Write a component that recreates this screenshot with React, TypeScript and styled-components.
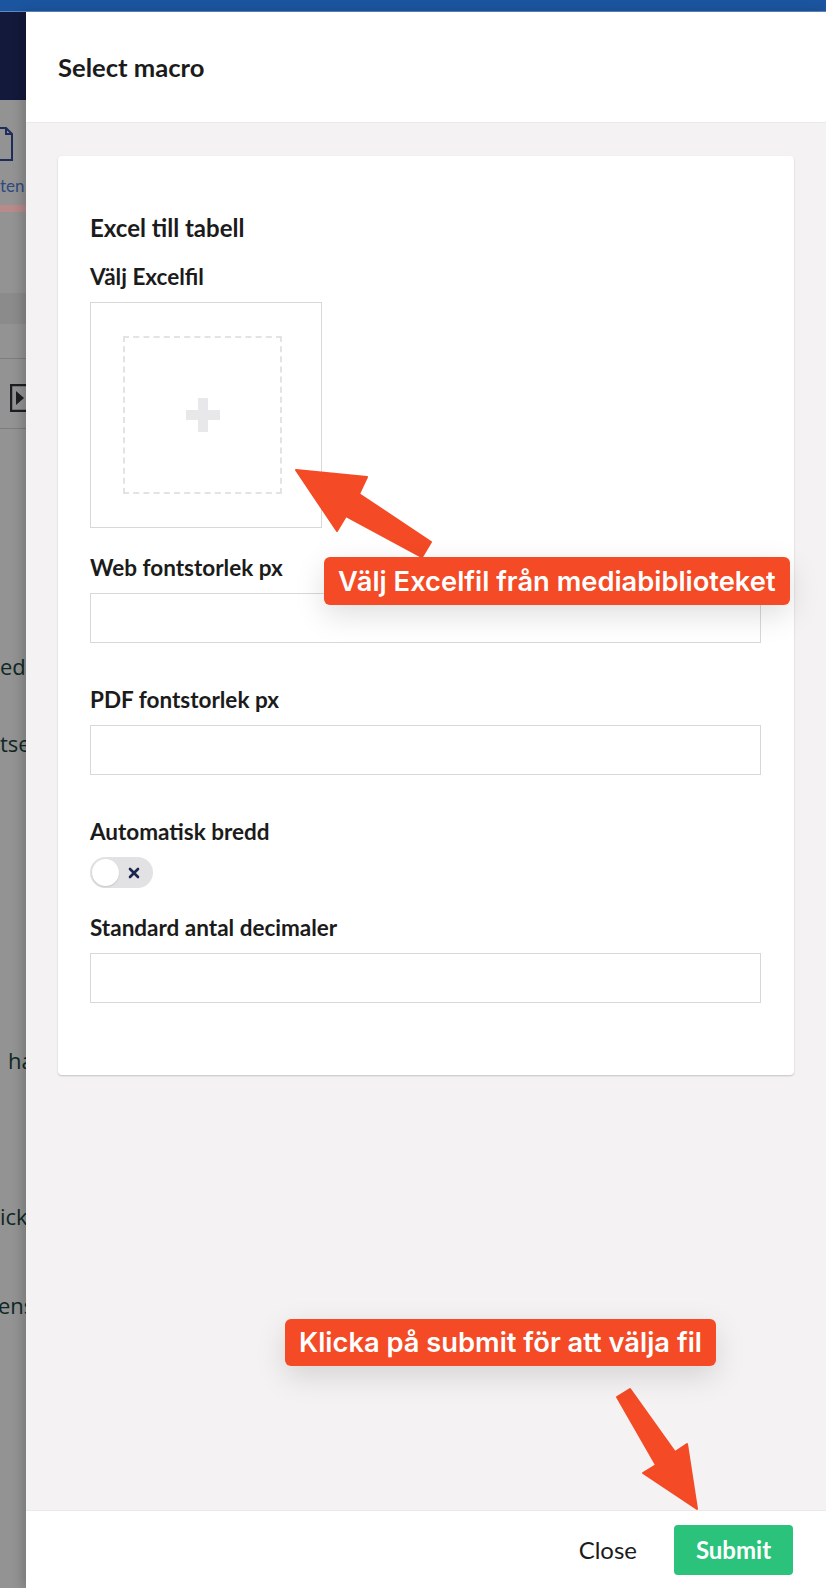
import React from 'react';
import styled, { createGlobalStyle } from 'styled-components';

const GlobalStyle = createGlobalStyle`
  html, body {
    margin: 0;
    padding: 0;
  }
  body {
    font-family: Lato, "Open Sans", sans-serif;
    background: #ffffff;
    color: #1b1b1b;
  }
  * {
    box-sizing: border-box;
  }
`;

const Page = styled.div`
  position: relative;
  width: 826px;
  height: 1588px;
  display: flex;
  flex-direction: column;
  overflow: hidden;
`;

const TopBar = styled.div`
  height: 12px;
  flex-shrink: 0;
  background: #1b55a0;
  border-bottom: 1px solid #6489bd;
`;

const Main = styled.div`
  flex: 1;
  display: flex;
  min-height: 0;
`;

/* the dimmed page behind the dialog */
const Backdrop = styled.div`
  width: 26px;
  flex-shrink: 0;
  background: #939393;
  display: flex;
  flex-direction: column;
  overflow: hidden;
`;

const NavBlock = styled.div`
  height: 88px;
  flex-shrink: 0;
  background: #12193a;
`;

const BackdropIcon = styled.svg<{ $mt: number; $ml: number }>`
  display: block;
  flex-shrink: 0;
  margin-top: ${(p) => p.$mt}px;
  margin-left: ${(p) => p.$ml}px;
`;

const TabText = styled.div`
  margin-top: 15px;
  height: 20px;
  line-height: 20px;
  font-family: Lato, sans-serif;
  font-size: 17px;
  color: #2f4a7e;
  white-space: nowrap;
`;

const TabUnderline = styled.div`
  margin-top: 9px;
  height: 7px;
  flex-shrink: 0;
  background: #b88a8a;
`;

const Band = styled.div`
  margin-top: 81px;
  height: 31px;
  flex-shrink: 0;
  background: #8b8b8b;
`;

const Rule = styled.div<{ $mt: number }>`
  margin-top: ${(p) => p.$mt}px;
  height: 1px;
  flex-shrink: 0;
  background: #7d7d7d;
`;

const BackdropWord = styled.div<{ $mt: number; $ml?: number }>`
  margin-top: ${(p) => p.$mt}px;
  margin-left: ${(p) => p.$ml ?? 0}px;
  height: 30px;
  line-height: 30px;
  flex-shrink: 0;
  font-family: "Open Sans", sans-serif;
  font-size: 22px;
  color: #0f2824;
  white-space: nowrap;
`;

const Dialog = styled.div`
  flex: 1;
  display: flex;
  flex-direction: column;
  background: #f4f2f3;
  box-shadow: -4px 0 10px rgba(0, 0, 0, 0.18);
  z-index: 1;
`;

const Header = styled.header`
  height: 111px;
  flex-shrink: 0;
  display: flex;
  align-items: center;
  padding: 0 32px;
  background: #ffffff;
  border-bottom: 1px solid #e9e9eb;
`;

const Title = styled.h1`
  margin: 0;
  font-size: 25.6px;
  font-weight: 700;
  color: #1b1b1b;
`;

const Body = styled.div`
  flex: 1;
  padding: 33px 32px 0 32px;
`;

const Card = styled.div`
  background: #ffffff;
  border-radius: 4px;
  box-shadow: 0 1px 2px rgba(0, 0, 0, 0.2);
  padding: 57px 33px 28px 32px;
`;

const CardHeading = styled.h2`
  margin: 0 0 21px 0;
  font-size: 24px;
  line-height: 29px;
  font-weight: 700;
  color: #1b1b1b;
`;

const Property = styled.div<{ $gap: number }>`
  margin-bottom: ${(p) => p.$gap}px;
`;

const Label = styled.label`
  display: block;
  margin-bottom: 12px;
  font-size: 22.5px;
  line-height: 27px;
  font-weight: 700;
  color: #1b1b1b;
`;

const TextInput = styled.input`
  display: block;
  width: 100%;
  height: 50px;
  margin: 0;
  padding: 0 12px;
  border: 1px solid #d8d7d9;
  border-radius: 0;
  background: #ffffff;
  font-family: Lato, sans-serif;
  font-size: 18px;
  outline: none;
`;

const UploadBox = styled.div`
  width: 232px;
  height: 226px;
  padding-left: 32px;
  border: 1px solid #d8d7d9;
  display: flex;
  align-items: center;
`;

const UploadTarget = styled.div`
  width: 159px;
  height: 158px;
  border: 2px dashed #e3e2e4;
  display: flex;
  align-items: center;
  justify-content: center;
`;

const Toggle = styled.div`
  width: 63px;
  height: 31px;
  border-radius: 16px;
  background: #e2e1e4;
  display: flex;
  align-items: center;
  gap: 9px;
  padding: 0 2px;
`;

const Knob = styled.span`
  width: 27px;
  height: 27px;
  border-radius: 50%;
  background: #ffffff;
  box-shadow: 0 1px 2px rgba(0, 0, 0, 0.12);
`;

const Footer = styled.footer`
  height: 78px;
  flex-shrink: 0;
  display: flex;
  align-items: center;
  justify-content: flex-end;
  padding-right: 33px;
  background: #ffffff;
  border-top: 1px solid #e9e9eb;
`;

const CloseButton = styled.button`
  height: 50px;
  margin-right: 21px;
  padding: 0 16px;
  border: none;
  background: transparent;
  font-family: Lato, sans-serif;
  font-size: 24px;
  color: #1b1b1b;
  cursor: pointer;
`;

const SubmitButton = styled.button`
  width: 119px;
  height: 50px;
  padding: 0;
  border: none;
  border-radius: 4px;
  background: #2bc37c;
  color: #ffffff;
  font-family: Lato, sans-serif;
  font-size: 24px;
  font-weight: 700;
  cursor: pointer;
`;

/* tutorial annotations lying over the screenshot */
const Callout = styled.div<{ $x: number; $y: number; $h: number }>`
  position: absolute;
  left: ${(p) => p.$x}px;
  top: ${(p) => p.$y}px;
  height: ${(p) => p.$h}px;
  padding: 0 14px;
  display: flex;
  align-items: center;
  border-radius: 6px;
  background: #f44a25;
  color: #ffffff;
  font-family: Inter, "Open Sans", sans-serif;
  font-size: 27.3px;
  font-weight: 600;
  white-space: nowrap;
  box-shadow: 0 10px 30px rgba(0, 0, 0, 0.13);
  z-index: 3;
`;

const ArrowLayer = styled.svg`
  position: absolute;
  left: 0;
  top: 0;
  pointer-events: none;
  z-index: 2;
`;

const ARROW = '#f44a25';

const App: React.FC = () => {
  return (
    <>
      <GlobalStyle />
      <Page>
        <TopBar />
        <Main>
          <Backdrop>
            <NavBlock />
            <BackdropIcon $mt={27} $ml={-3} width="16" height="34" viewBox="0 0 16 34">
              <path d="M1 1 H9 L15 7 V33 H1 Z" fill="none" stroke="#1e2d5c" strokeWidth="2" />
              <path d="M9 1 V7 H15" fill="none" stroke="#1e2d5c" strokeWidth="2" />
            </BackdropIcon>
            <TabText>ten</TabText>
            <TabUnderline />
            <Band />
            <Rule $mt={34} />
            <BackdropIcon $mt={25} $ml={10} width="16" height="28" viewBox="0 0 16 28">
              <rect x="1" y="1" width="20" height="26" fill="none" stroke="#1d1d22" strokeWidth="2.5" />
              <path d="M6 7 L14 14 L6 21 Z" fill="#1d1d22" />
            </BackdropIcon>
            <Rule $mt={16} />
            <BackdropWord $mt={222}>edi</BackdropWord>
            <BackdropWord $mt={47}>tse</BackdropWord>
            <BackdropWord $mt={287} $ml={8}>ha</BackdropWord>
            <BackdropWord $mt={126}>ick</BackdropWord>
            <BackdropWord $mt={59} $ml={-2}>ens</BackdropWord>
          </Backdrop>

          <Dialog>
            <Header>
              <Title>Select macro</Title>
            </Header>

            <Body>
              <Card>
                <CardHeading>Excel till tabell</CardHeading>

                <Property $gap={26}>
                  <Label>Välj Excelfil</Label>
                  <UploadBox>
                    <UploadTarget>
                      <svg width="34" height="34" viewBox="0 0 34 34">
                        <rect x="12" y="0" width="10" height="34" fill="#e8e7e9" />
                        <rect x="0" y="12" width="34" height="10" fill="#e8e7e9" />
                      </svg>
                    </UploadTarget>
                  </UploadBox>
                </Property>

                <Property $gap={43}>
                  <Label>Web fontstorlek px</Label>
                  <TextInput type="text" />
                </Property>

                <Property $gap={43}>
                  <Label>PDF fontstorlek px</Label>
                  <TextInput type="text" />
                </Property>

                <Property $gap={26}>
                  <Label>Automatisk bredd</Label>
                  <Toggle>
                    <Knob />
                    <svg width="12" height="12" viewBox="0 0 12 12">
                      <path d="M2 2 L10 10 M10 2 L2 10" stroke="#1b2550" strokeWidth="2.6" strokeLinecap="round" />
                    </svg>
                  </Toggle>
                </Property>

                <Property $gap={44}>
                  <Label>Standard antal decimaler</Label>
                  <TextInput type="text" />
                </Property>
              </Card>
            </Body>

            <Footer>
              <CloseButton>Close</CloseButton>
              <SubmitButton>Submit</SubmitButton>
            </Footer>
          </Dialog>
        </Main>

        <ArrowLayer width="826" height="1588" viewBox="0 0 826 1588">
          <polygon
            points="296,470 367,477 359,494 431,542 422,557 346,516 337,531"
            fill={ARROW}
            stroke={ARROW}
            strokeWidth="2"
            strokeLinejoin="round"
          />
          <polygon
            points="617,1397 630,1389 675,1452 687,1444 697,1509 643,1473 656,1465"
            fill={ARROW}
            stroke={ARROW}
            strokeWidth="2"
            strokeLinejoin="round"
          />
        </ArrowLayer>

        <Callout $x={324} $y={557} $h={48}>Välj Excelfil från mediabiblioteket</Callout>
        <Callout $x={285} $y={1319} $h={47}>Klicka på submit för att välja fil</Callout>
      </Page>
    </>
  );
};

export default App;
